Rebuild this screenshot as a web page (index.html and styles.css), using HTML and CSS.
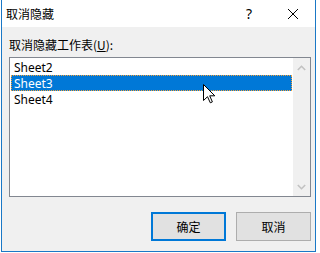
FILE: index.html
```html
<!DOCTYPE html>
<html lang="zh-CN">
<head>
<meta charset="utf-8">
<title>取消隐藏</title>
<link rel="stylesheet" href="styles.css">
</head>
<body>
<div class="window">
  <div class="titlebar">
    <span class="title">取消隐藏</span>
    <span class="help">?</span>
    <span class="close"><svg width="10" height="10" viewBox="0 0 10 10"><path d="M0 0L10 10M10 0L0 10" stroke="#000" stroke-width="1"/></svg></span>
  </div>
  <div class="body">
    <div class="label">取消隐藏工作表(<u>U</u>):</div>
    <div class="listbox">
      <div class="items">
        <div class="item">Sheet2</div>
        <div class="item sel">Sheet3</div>
        <div class="item">Sheet4</div>
      </div>
      <div class="scrollbar">
        <svg class="arrow" width="9" height="6" viewBox="0 0 9 6"><path d="M0.8 5L4.5 1.3L8.2 5" fill="none" stroke="#c2c2c2" stroke-width="1.6"/></svg>
        <svg class="arrow" width="9" height="6" viewBox="0 0 9 6"><path d="M0.8 1L4.5 4.7L8.2 1" fill="none" stroke="#c2c2c2" stroke-width="1.6"/></svg>
      </div>
    </div>
    <div class="buttons">
      <button class="btn default">确定</button>
      <button class="btn">取消</button>
    </div>
  </div>
  <svg class="cursor" width="13" height="20" viewBox="0 0 13 20"><path d="M0.5 0.5L0.5 16.5L4.5 12.7L7.3 18.8L9.4 17.9L6.7 11.8L11.8 11.8Z" fill="#fff" stroke="#000" stroke-width="1" stroke-linejoin="miter"/></svg>
</div>
</body>
</html>
```
FILE: styles.css
```css
html, body {
  margin: 0;
  padding: 0;
  background: #ffffff;
}
body {
  width: 317px;
  height: 253px;
  overflow: hidden;
  font-family: "Noto Sans", "Noto Sans CJK SC", sans-serif;
  font-size: 12px;
  color: #000;
}
.window {
  position: relative;
  margin-left: 1px;
  width: 313px;
  height: 251px;
  border: 1px solid #1a78c6;
  border-top: none;
  display: flex;
  flex-direction: column;
}
.titlebar {
  height: 27px;
  background: #fff;
  display: flex;
  align-items: center;
  padding-left: 4px;
  flex: none;
}
.title {
  font-family: "Noto Sans CJK SC", sans-serif;
  font-size: 12px;
  line-height: 16px;
  flex: 1;
}
.help {
  font-family: "Noto Sans", sans-serif;
  font-size: 14px;
  line-height: 16px;
  width: 12px;
  margin-right: 33px;
  text-align: center;
}
.close {
  display: flex;
  margin-right: 17px;
}
.body {
  flex: 1;
  background: #f0f0f0;
  padding: 10px 6px 0 7px;
  display: flex;
  flex-direction: column;
}
.label {
  font-family: "Noto Sans CJK SC", sans-serif;
  font-size: 12px;
  line-height: 16px;
  height: 16px;
}
.listbox {
  margin-top: 4px;
  width: 300px;
  height: 138px;
  border: 1px solid #828790;
  background: #fff;
  display: flex;
}
.items {
  flex: 1;
  padding: 1px;
}
.item {
  height: 16px;
  line-height: 15px;
  padding-left: 2px;
  border: 1px solid transparent;
  box-sizing: border-box;
  font-size: 12px;
}
.item.sel {
  background: #0078d7;
  color: #fff;
  border: 1px dotted #f4a13a;
}
.scrollbar {
  width: 17px;
  background: #f0f0f0;
  display: flex;
  flex-direction: column;
  justify-content: space-between;
  align-items: center;
  padding: 7px 0 6px;
}
.buttons {
  margin-top: 15px;
  display: flex;
  justify-content: flex-end;
  gap: 10px;
  width: 302px;
}
.btn {
  width: 75px;
  height: 29px;
  margin: 0;
  padding: 0;
  background: #e1e1e1;
  border: 1px solid #adadad;
  font-family: "Noto Sans CJK SC", sans-serif;
  font-size: 12px;
  color: #000;
}
.btn.default {
  border: 2px solid #0078d7;
}
.cursor {
  position: absolute;
  left: 201px;
  top: 84px;
}
```
